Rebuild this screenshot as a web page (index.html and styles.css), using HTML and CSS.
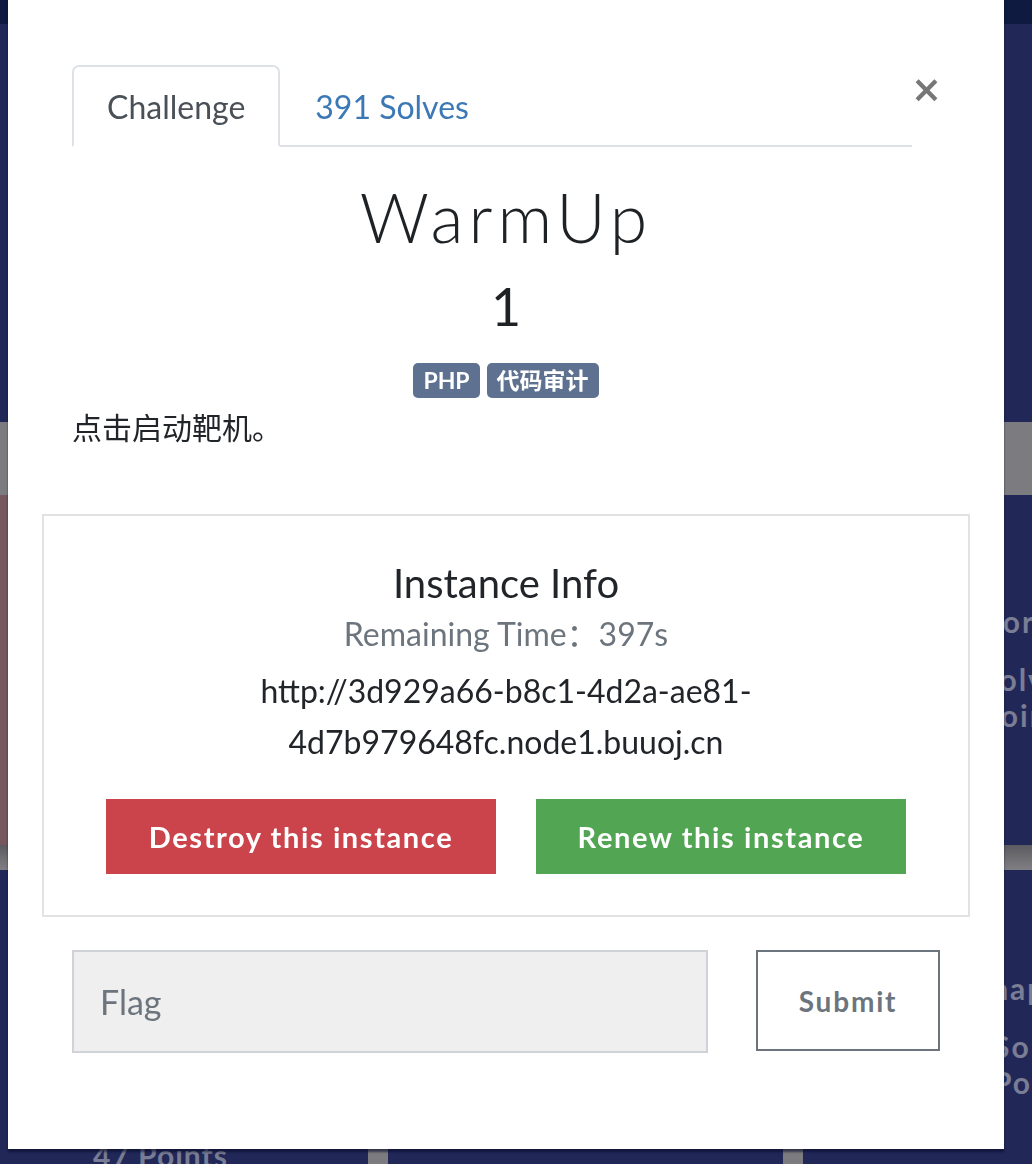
FILE: index.html
```html
<!DOCTYPE html>
<html lang="en">
<head>
    <meta charset="UTF-8">
    <meta name="viewport" content="width=device-width, initial-scale=1.0">
    <title>WarmUp</title>
    <link rel="stylesheet" href="styles.css">
</head>
<body>
    <!-- page behind the dialog -->
    <div class="navbar"></div>
    <div class="board">
        <div class="row">
            <div class="card">
                <div class="card-head"></div>
                <div class="card-body solved"></div>
            </div>
            <div class="card">
                <div class="card-head"></div>
                <div class="card-body"></div>
            </div>
            <div class="card">
                <div class="card-head"></div>
                <div class="card-body">
                    <p class="card-title">Inform</p>
                    <p class="card-meta">Solves<br>Points</p>
                </div>
            </div>
        </div>
        <div class="row row-second">
            <div class="card">
                <div class="card-head thin"></div>
                <div class="card-body">
                    <p class="card-points">47 Points</p>
                </div>
            </div>
            <div class="card">
                <div class="card-head thin"></div>
                <div class="card-body"></div>
            </div>
            <div class="card">
                <div class="card-head thin"></div>
                <div class="card-body">
                    <p class="card-title">Snap</p>
                    <p class="card-meta">Solves<br>Points</p>
                </div>
            </div>
        </div>
    </div>

    <div class="modal">
        <div class="modal-body">
            <button class="close" aria-label="Close">&times;</button>

            <ul class="tabs">
                <li class="tab active">Challenge</li>
                <li class="tab"><a href="#solves">391 Solves</a></li>
            </ul>

            <h2 class="chal-name">WarmUp</h2>
            <h3 class="chal-value">1</h3>
            <div class="tags">
                <span class="badge">PHP</span>
                <span class="badge">代码审计</span>
            </div>
            <p class="chal-desc">点击启动靶机。</p>

            <div class="instance">
                <h4 class="instance-title">Instance Info</h4>
                <p class="instance-time">Remaining Time：397s</p>
                <p class="instance-url">http://3d929a66-b8c1-4d2a-ae81-<br>4d7b979648fc.node1.buuoj.cn</p>
                <div class="instance-actions">
                    <button class="btn btn-destroy">Destroy this instance</button>
                    <button class="btn btn-renew">Renew this instance</button>
                </div>
            </div>

            <form class="flag-form" onsubmit="return false">
                <input class="flag-input" type="text" placeholder="Flag">
                <button class="btn btn-submit" type="submit">Submit</button>
            </form>
        </div>
    </div>
</body>
</html>
```

FILE: styles.css
```css
* {
    margin: 0;
    padding: 0;
    box-sizing: border-box;
}

body {
    font-family: Lato, "Noto Sans CJK SC", sans-serif;
    background: #212858;
    color: #212529;
    height: 1164px;
    overflow: hidden;
}

/* background page (dimmed) */
.navbar {
    height: 24px;
    background: #0f1a40;
}

.board {
    margin-left: -27px;
    width: 1225px;
    padding-top: 398px;
}

.row {
    display: grid;
    grid-template-columns: repeat(3, 395px);
    gap: 20px;
}

.card-head {
    height: 73px;
    background: #7c7c80;
}

.card-head.thin {
    height: 25px;
    background: linear-gradient(#5a5a60, #808084);
}

.card-body {
    height: 350px;
    background: #212858;
    padding: 108px 0 0 158px;
    overflow: hidden;
}

.card-body.solved {
    background: #76565f;
}

.row-second {
    background: #7c7c80;
}

.row-second .card-body {
    height: 320px;
    padding-top: 100px;
    padding-left: 170px;
}

.card-title,
.card-meta {
    color: #7a7d93;
    font-weight: 700;
    font-size: 30px;
    letter-spacing: 2px;
    white-space: nowrap;
}

.card-meta {
    line-height: 36px;
    margin: 22px 0 0 20px;
}

.card-points {
    color: #787c94;
    font-weight: 700;
    font-size: 30px;
    padding-top: 167px;
    margin-left: -50px;
    letter-spacing: 1px;
}

/* dialog */
.modal {
    position: fixed;
    top: -20px;
    left: 8px;
    width: 996px;
    height: 1169px;
    background: #fff;
    box-shadow: 0 3px 2px rgba(8, 12, 40, 0.6);
}

.modal-body {
    position: relative;
    padding: 85px 64px 0 64px;
}

.close {
    position: absolute;
    top: 91px;
    right: 62px;
    border: none;
    background: none;
    color: #777;
    font-family: "DejaVu Sans", sans-serif;
    font-size: 37px;
    font-weight: 700;
    line-height: 1;
    cursor: pointer;
}

.tabs {
    display: flex;
    list-style: none;
    margin-right: 28px;
    border-bottom: 2px solid #dee2e6;
}

.tab {
    height: 82px;
    padding: 0 33px;
    margin-bottom: -2px;
    font-size: 32px;
    line-height: 80px;
    border: 2px solid transparent;
    border-radius: 7px 7px 0 0;
}

.tab.active {
    color: #495057;
    border-color: #dee2e6 #dee2e6 #fff;
    background: #fff;
}

.tab a {
    color: #3b78b5;
    text-decoration: none;
}

.chal-name {
    margin-top: 30px;
    text-align: center;
    font-size: 68px;
    font-weight: 300;
    letter-spacing: 5px;
    line-height: 80px;
    color: #1f2225;
}

.chal-value {
    margin-top: 18px;
    text-align: center;
    font-size: 52px;
    font-weight: 400;
    line-height: 62px;
    color: #1f2225;
}

.tags {
    display: flex;
    justify-content: center;
    gap: 7px;
    margin-top: 26px;
}

.badge {
    background: #5e7190;
    color: #fff;
    font-size: 23px;
    font-weight: 700;
    line-height: 35px;
    padding: 0 10px;
    border-radius: 5px;
}

.chal-desc {
    margin-top: 11px;
    font-size: 30px;
    line-height: 36px;
}

.instance {
    margin: 69px -30px 0;
    border: 2px solid #e2e2e2;
    text-align: center;
    padding: 42px 0 41px;
}

.instance-title {
    font-size: 40px;
    font-weight: 400;
    line-height: 50px;
}

.instance-time {
    margin-top: 4px;
    color: #6c757d;
    font-size: 32px;
    line-height: 44px;
}

.instance-url {
    margin-top: 9px;
    font-size: 32px;
    line-height: 51px;
}

.instance-actions {
    display: flex;
    justify-content: center;
    gap: 40px;
    margin-top: 32px;
}

.btn {
    border: none;
    font-family: Lato, sans-serif;
    font-weight: 700;
    cursor: pointer;
}

.btn-destroy,
.btn-renew {
    height: 75px;
    color: #fff;
    font-size: 29px;
    letter-spacing: 1.6px;
}

.btn-destroy {
    width: 390px;
    background: #cc444b;
}

.btn-renew {
    width: 370px;
    background: #52a552;
}

.flag-form {
    display: flex;
    justify-content: space-between;
    margin-top: 33px;
}

.flag-input {
    width: 636px;
    height: 103px;
    background: #efefef;
    border: 2px solid #cfd3d8;
    padding: 0 26px;
    font-family: Lato, sans-serif;
    font-size: 34px;
    color: #495057;
}

.flag-input::placeholder {
    color: #6c757d;
}

.btn-submit {
    width: 184px;
    height: 101px;
    background: #fff;
    border: 2px solid #6c757d;
    color: #6c757d;
    font-size: 28px;
    letter-spacing: 1.8px;
}
```
